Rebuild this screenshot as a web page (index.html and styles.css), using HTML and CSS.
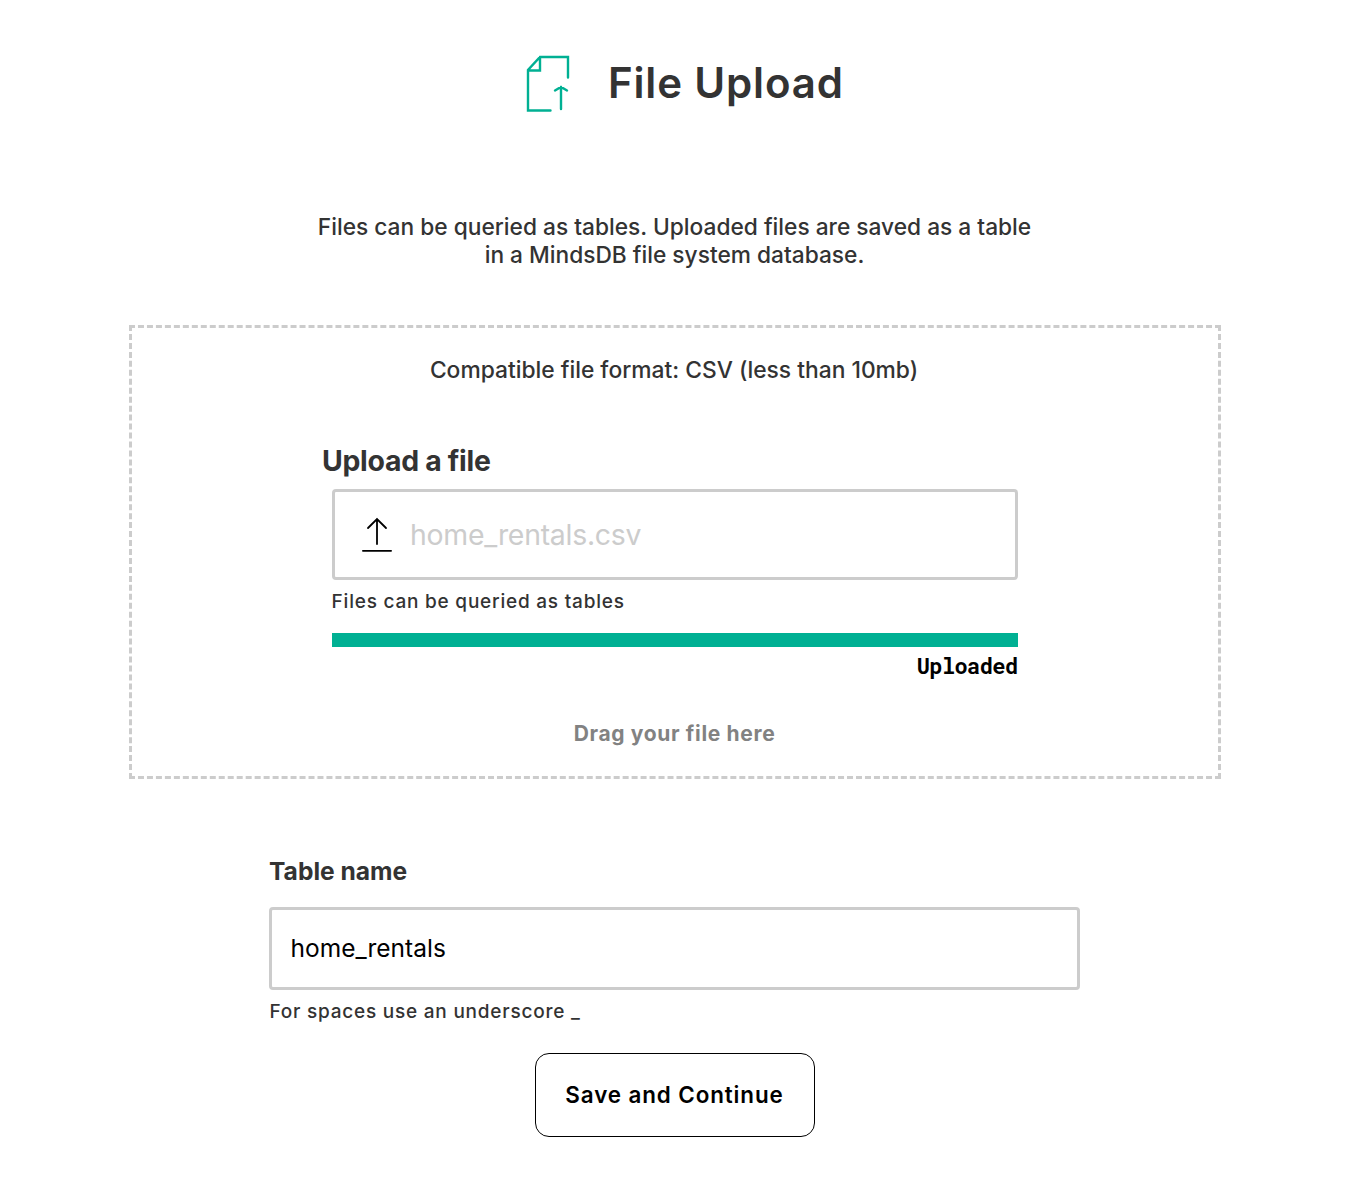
FILE: index.html
```html
<!DOCTYPE html>
<html lang="en">
<head>
<meta charset="utf-8">
<title>File Upload</title>
<link rel="stylesheet" href="styles.css">
</head>
<body>
<main class="page">
  <header class="header">
    <svg class="file-icon" width="44" height="58" viewBox="0 0 44 58" fill="none" stroke="#00b093" stroke-width="2.4" stroke-linecap="round">
      <path d="M24.5 55.5H2V15L14 2H42V22.5M2 15.5H14V2M35 54V32M29 35.5L35 32L41 35.5"/>
    </svg>
    <h1 class="title">File Upload</h1>
  </header>
  <p class="intro">Files can be queried as tables. Uploaded files are saved as a table<br>in a MindsDB file system database.</p>
  <section class="dropzone">
    <p class="format">Compatible file format: CSV (less than 10mb)</p>
    <h2 class="upload-title">Upload a file</h2>
    <div class="upload-box">
      <svg class="upload-icon" width="30" height="36" viewBox="0 0 30 36" fill="none" stroke="#000" stroke-width="1.8" stroke-linecap="round"><path d="M.9 33.8H29.1M15 27V2M6 11L15 2L24 11"/></svg>
      <span class="filename">home_rentals.csv</span>
    </div>
    <p class="hint upload-hint">Files can be queried as tables</p>
    <div class="progress"></div>
    <p class="status">Uploaded</p>
    <p class="drag">Drag your file here</p>
  </section>
  <section class="table-form">
    <h2 class="table-title">Table name</h2>
    <div class="table-input">home_rentals</div>
    <p class="hint table-hint">For spaces use an underscore _</p>
  </section>
  <button class="save">Save and Continue</button>
</main>
</body>
</html>
```

FILE: styles.css
```css
* { box-sizing: border-box; }
body { margin: 0; background: #fff; color: #333; font-family: Inter, sans-serif; }
h1, h2, p { margin: 0; white-space: nowrap; }
.page { width: 1353px; height: 1180px; overflow: hidden; }
.header { display: flex; height: 58px; margin: 55px 0 0 526px; gap: 38px; }
.title { font-size: 42px; font-weight: 600; line-height: 56px; letter-spacing: 0.84px; }
.intro { width: 1349px; margin-top: 100px; text-align: center; font-size: 22.72px; font-weight: 500; line-height: 28px; }
.dropzone { width: 1092px; height: 454px; margin: 56px 0 0 129px; padding-top: 28px; border: 3px dashed #ccc; }
.format { width: 1084px; text-align: center; font-size: 22.8px; font-weight: 500; line-height: 28px; }
.upload-title { margin: 58px 0 0 190px; font-size: 28.4px; line-height: 38px; font-weight: 700; letter-spacing: -0.28px; }
.upload-box { display: flex; align-items: center; width: 686px; height: 91px; margin: 9px 0 0 200px; padding-left: 27px; gap: 18px; border: 3px solid #ccc; border-radius: 4px; }
.filename { color: #ccc; font-size: 28.4px; letter-spacing: -0.25px; }
.hint { font-size: 19px; font-weight: 500; line-height: 24px; letter-spacing: 0.78px; }
.upload-hint { margin: 10px 0 0 199.6px; }
.progress { width: 686px; height: 14px; margin: 19px 0 0 200px; background: #00b093; }
.status { width: 685.5px; margin: 6px 0 0 200px; text-align: right; color: #000; font: 700 22px/26px "Roboto Mono", "Liberation Mono", monospace; letter-spacing: -0.6px; }
.drag { width: 1085px; margin-top: 41px; text-align: center; color: #828282; font-size: 21px; line-height: 28px; font-weight: 700; letter-spacing: 0.66px; }
.table-form { width: 811px; margin: 76px 0 0 269px; }
.table-title { font-size: 24.6px; line-height: 32px; font-weight: 700; }
.table-input { height: 83px; margin-top: 20px; padding-left: 18.6px; border: 3px solid #ccc; border-radius: 4px; color: #000; font-size: 24.5px; line-height: 77px; }
.table-hint { margin-top: 10px; padding-left: 0.4px; }
.save { display: block; width: 280px; height: 84px; margin: 29px 0 0 535px; padding: 0 1px 0 0; border: 1px solid #000; border-radius: 14px; background: #fff; color: #000; font: 600 22.4px/28px Inter, sans-serif; letter-spacing: 0.9px; }
```
